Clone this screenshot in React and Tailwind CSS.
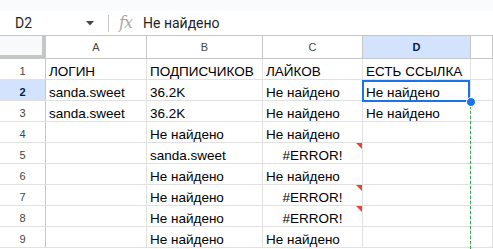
import React from "react";

const W = [46, 101, 116, 100, 108, 22];

const rows = [
  ["ЛОГИН", "ПОДПИСЧИКОВ", "ЛАЙКОВ", "ЕСТЬ ССЫЛКА"],
  ["sanda.sweet", "36.2K", "Не найдено", "Не найдено"],
  ["sanda.sweet", "36.2K", "Не найдено", "Не найдено"],
  ["", "Не найдено", "Не найдено", ""],
  ["", "sanda.sweet", "#ERROR!", ""],
  ["", "Не найдено", "Не найдено", ""],
  ["", "Не найдено", "#ERROR!", ""],
  ["", "Не найдено", "#ERROR!", ""],
  ["", "Не найдено", "Не найдено", ""],
];

function Cell({ w, text }) {
  const err = text === "#ERROR!";
  return (
    <div
      className={`relative h-full shrink-0 border-r border-[#e1e1e1] flex items-end px-[3px] overflow-hidden whitespace-nowrap text-[13.5px] leading-[14px] text-black ${
        err ? "justify-center" : ""
      }`}
      style={{ width: w }}
    >
      {text}
      {err && (
        <div className="absolute right-0 top-0 w-0 h-0 border-t-[6px] border-l-[6px] border-t-[#ea4335] border-l-transparent" />
      )}
    </div>
  );
}

export default function App() {
  return (
    <div className="relative w-[493px] h-[249px] overflow-hidden bg-white font-['Liberation_Sans',Arial,sans-serif]">
      <div className="h-[11px] bg-[#f9fbfd]" />
      {/* formula bar */}
      <div className="h-[24px] flex items-center bg-white">
        <div className="w-[80px] pl-[15px] text-[14px] text-[#1f1f1f] font-['Roboto',sans-serif]">D2</div>
        <svg width="8" height="5" viewBox="0 0 8 5" className="ml-[6px]">
          <path d="M0 0 L8 0 L4 4.5 Z" fill="#444746" />
        </svg>
        <div className="ml-[14px] w-px h-[17px] bg-[#c7c7c7]" />
        <div className="ml-[10px] w-[20px] text-[16px] italic text-[#a8a8a8] font-['DejaVu_Serif',serif] leading-none tracking-[-1px]">fx</div>
        <div className="ml-[4px] text-[14px] text-[#1f1f1f] font-['Roboto',sans-serif]">Не найдено</div>
      </div>
      {/* header row */}
      <div className="flex h-[24px] border-t border-[#c4c7c5]">
        <div className="h-full shrink-0 bg-[#f8f9fa] border-r-4 border-b-4 border-[#c4c7c5]" style={{ width: W[0] }} />
        {["A", "B", "C", "D", ""].map((l, i) => (
          <div
            key={i}
            className={`h-full shrink-0 flex items-center justify-center border-r border-b border-[#c4c7c5] text-[11px] ${
              l === "D" ? "bg-[#d3e3fd] text-[#041e49] font-bold" : "bg-white text-[#444746]"
            }`}
            style={{ width: W[i + 1] }}
          >
            {l}
          </div>
        ))}
      </div>
      {rows.map((r, ri) => (
        <div key={ri} className="flex h-[21px] border-b border-[#e1e1e1]">
          <div
            className={`h-full shrink-0 flex items-center justify-center pt-[4px] border-r border-[#c4c7c5] text-[11px] ${
              ri === 1 ? "bg-[#d3e3fd] text-[#041e49] font-bold" : "bg-white text-[#444746]"
            }`}
            style={{ width: W[0] }}
          >
            {ri + 1}
          </div>
          {r.map((t, ci) => (
            <Cell key={ci} w={W[ci + 1]} text={t} />
          ))}
          <Cell w={W[5]} text="" />
        </div>
      ))}
      {/* selection */}
      <div className="absolute left-[362px] top-[80px] w-[108px] h-[22px] border-2 border-[#1a73e8]" />
      <svg className="absolute left-[469px] top-[106px]" width="3" height="143">
        <line x1="1.5" y1="0" x2="1.5" y2="143" stroke="#34a853" strokeWidth="1" strokeDasharray="3 2" />
      </svg>
      <div className="absolute left-[466px] top-[97px] w-[10px] h-[10px] rounded-full bg-[#1a73e8] border border-white" />
    </div>
  );
}
